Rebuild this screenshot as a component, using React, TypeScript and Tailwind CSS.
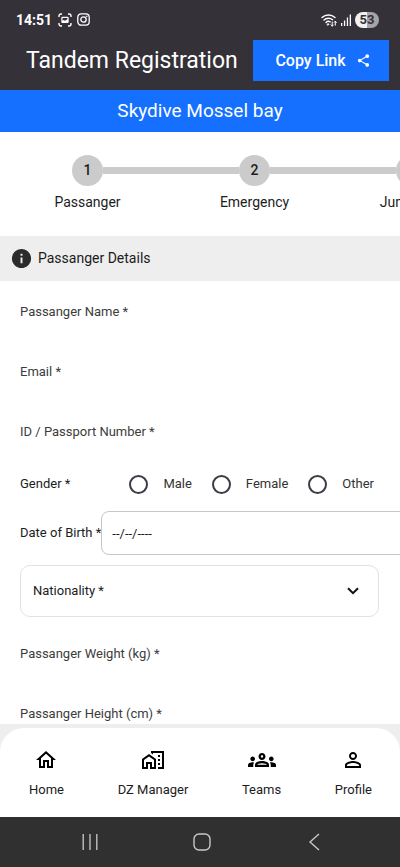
import { useState } from 'react';
import {
  MdInfo,
  MdOutlineGroups,
  MdOutlineHome,
  MdOutlineHomeWork,
  MdPersonOutline,
  MdShare,
} from 'react-icons/md';

const STEPS = [
  { label: 'Passanger', width: 'w-[167px]' },
  { label: 'Emergency', width: 'w-[167px]' },
  { label: 'Jump Info', width: 'w-[147px]' },
];
const GENDERS = ['Male', 'Female', 'Other'];

const NAV_ITEMS = [
  { label: 'Home', Icon: MdOutlineHome },
  { label: 'DZ Manager', Icon: MdOutlineHomeWork },
  { label: 'Teams', Icon: MdOutlineGroups },
  { label: 'Profile', Icon: MdPersonOutline },
];

function StatusBar() {
  return (
    <div className="flex h-[39px] items-center justify-between pl-4 pr-[21px] text-white">
      <div className="flex items-center gap-[5px]">
        <span className="text-[14px] leading-5 font-bold">14:51</span>
        <svg className="ml-px size-[14px]" viewBox="0 0 14 14" fill="none" stroke="currentColor" strokeWidth="1.4">
          <path d="M1 4V3a2 2 0 0 1 2-2h1M10 1h1a2 2 0 0 1 2 2v1M13 10v1a2 2 0 0 1-2 2h-1M4 13H3a2 2 0 0 1-2-2v-1" />
          <rect x="3.9" y="4.4" width="6.2" height="5" rx="0.6" strokeWidth="1.2" />
          <path d="M4 9.4V8l1.6-1 1.4.8L10 6v3.4z" fill="currentColor" stroke="none" />
        </svg>
        <svg className="size-[13px]" viewBox="0 0 13 13" fill="none" stroke="currentColor" strokeWidth="1.3">
          <rect x="0.8" y="0.8" width="11.4" height="11.4" rx="3.4" />
          <circle cx="6.5" cy="6.5" r="2.7" />
          <circle cx="9.8" cy="3.2" r="0.8" fill="currentColor" stroke="none" />
        </svg>
      </div>
      <div className="flex items-center gap-1">
        <svg className="h-[14px] w-4" viewBox="0 0 16 14" fill="none" stroke="currentColor" strokeWidth="1.4" strokeLinecap="round">
          <path d="M1 4.6a9.3 9.3 0 0 1 13 0M3 7.1a6.4 6.4 0 0 1 8.6-.3M5 9.4a3.6 3.6 0 0 1 4.2-.6" />
          <path d="M6 11.2a1.5 1.5 0 0 1 2.2 0L7.1 12.3z" fill="currentColor" strokeWidth="0.6" />
          <path d="M11.2 9v4M10 11.9l1.2 1.2 1.2-1.2M14.3 12.2V8.4M13.2 9.4l1.1-1.2 1.1 1.2" strokeWidth="1" />
        </svg>
        <svg className="h-3 w-[10px]" viewBox="0 0 10 12" fill="currentColor">
          <rect x="0" y="9" width="1.3" height="3" />
          <rect x="2.9" y="6.5" width="1.3" height="5.5" />
          <rect x="5.8" y="3.5" width="1.3" height="8.5" />
          <rect x="8.7" y="0.5" width="1.3" height="11.5" />
        </svg>
        <span className="flex h-4 w-6 items-center justify-center rounded-full bg-linear-to-r from-[#f1f1f1] from-50% to-[#a5a4a7] to-50% text-[13px] leading-4 font-bold text-[#343138]">
          53
        </span>
      </div>
    </div>
  );
}

function Stepper() {
  return (
    <ol className="flex overflow-hidden pt-[23px] pb-6 pl-1">
      {STEPS.map(({ label, width }, i) => (
        <li key={label} className={`flex shrink-0 flex-col items-center ${width}`}>
          <div className="flex w-full items-center">
            <span className={i === 0 ? 'h-[7px] flex-1' : 'h-[7px] flex-1 bg-[#cbcbcb]'} />
            <span className="flex size-[31px] items-center justify-center rounded-full bg-[#cbcbcb] text-[14px] font-medium">
              {i + 1}
            </span>
            <span className={i === STEPS.length - 1 ? 'h-[7px] flex-1' : 'h-[7px] flex-1 bg-[#cbcbcb]'} />
          </div>
          <span className="mt-1.5 text-[14px] leading-5">{label}</span>
        </li>
      ))}
    </ol>
  );
}

function TextField({ label, type = 'text' }: { label: string; type?: string }) {
  return (
    <input
      type={type}
      aria-label={label}
      placeholder={label}
      className="block h-[60px] w-full px-5 text-[13px] outline-none placeholder:text-[#3c3c3c] placeholder:opacity-100"
    />
  );
}

function PassengerForm() {
  const [gender, setGender] = useState('');

  return (
    <form>
      <TextField label="Passanger Name *" />
      <TextField label="Email *" type="email" />
      <TextField label="ID / Passport Number *" />

      <div
        role="radiogroup"
        aria-labelledby="gender-label"
        className="flex h-[46px] items-center pr-[26px] pl-5 text-[13px]"
      >
        <span id="gender-label" className="flex-1">
          Gender *
        </span>
        <div className="flex gap-5">
          {GENDERS.map((option) => (
            <label key={option} className="flex items-center gap-[15px] text-[#333]">
              <input
                type="radio"
                name="gender"
                value={option}
                checked={gender === option}
                onChange={() => setGender(option)}
                className="size-[19px] appearance-none rounded-full border-2 border-[#3d3b46] checked:border-[6px]"
              />
              {option}
            </label>
          ))}
        </div>
      </div>

      <div className="mt-1 flex items-center overflow-hidden pl-5 text-[13px]">
        <label htmlFor="dob" className="shrink-0">
          Date of Birth *
        </label>
        <input
          id="dob"
          type="text"
          defaultValue="--/--/----"
          className="h-11 w-full shrink-0 rounded-lg border border-[#c6c6c6] px-[10px] outline-none"
        />
      </div>

      <div className="relative mt-[10px] mr-[21px] mb-1.5 ml-5">
        <select
          aria-label="Nationality"
          defaultValue=""
          className="h-[52px] w-full appearance-none rounded-[10px] border border-[#e2e2e2] bg-white pr-10 pl-3 text-[13px] outline-none"
        >
          <option value="">Nationality *</option>
        </select>
        <svg
          className="pointer-events-none absolute top-[22px] right-5 h-2 w-3"
          viewBox="0 0 12 8"
          fill="none"
          stroke="#111"
          strokeWidth="2"
        >
          <path d="M1 1.2l5 5 5-5" />
        </svg>
      </div>

      <TextField label="Passanger Weight (kg) *" />
      <TextField label="Passanger Height (cm) *" />
    </form>
  );
}

function BottomNav() {
  return (
    <div className="bg-[#eee] pt-1">
      <nav className="flex h-[89px] justify-between rounded-t-[24px] bg-white pr-7 pl-[29px] pt-5 text-[13px]">
        {NAV_ITEMS.map(({ label, Icon }) => (
          <a key={label} href="#" className="flex flex-col items-center gap-2">
            <Icon className={label === 'Teams' ? '-my-0.5 size-7 text-black' : 'size-6 text-black'} />
            <span className="leading-5">{label}</span>
          </a>
        ))}
      </nav>
    </div>
  );
}

function SystemBar() {
  return (
    <div className="flex h-[50px] items-center justify-between bg-[#303030] pr-[77px] pl-[81px] text-[#c8c8c8]">
      <button aria-label="Recent apps">
        <svg className="size-[18px]" viewBox="0 0 18 18" fill="none" stroke="currentColor" strokeWidth="1.3">
          <path d="M2.2 1v16M9 1v16M15.8 1v16" />
        </svg>
      </button>
      <button aria-label="Home">
        <svg className="size-[18px]" viewBox="0 0 18 18" fill="none" stroke="currentColor" strokeWidth="1.4">
          <rect x="1" y="1" width="16" height="16" rx="5" />
        </svg>
      </button>
      <button aria-label="Back">
        <svg className="size-[18px]" viewBox="0 0 18 18" fill="none" stroke="currentColor" strokeWidth="1.4">
          <path d="M14 1L5 9l9 8" />
        </svg>
      </button>
    </div>
  );
}

export default function App() {
  return (
    <div className="flex h-screen flex-col overflow-hidden bg-white font-['Roboto',sans-serif] text-[#1c1c1c]">
      <header className="bg-[#343138] pb-[9px]">
        <StatusBar />
        <div className="flex items-center justify-between pt-px pr-[11px] pl-[26px]">
          <h1 className="text-[23px] leading-8 whitespace-nowrap text-white">Tandem Registration</h1>
          <button className="flex h-[41px] w-[136px] items-center justify-center gap-[10px] bg-[#1570ff] pl-1 text-[16px] font-medium text-white">
            Copy Link
            <MdShare className="size-[15px]" />
          </button>
        </div>
      </header>
      <div className="flex h-[42px] shrink-0 items-center justify-center bg-[#1570ff] text-[19px] text-white">
        Skydive Mossel bay
      </div>
      <main className="min-h-0 flex-1 overflow-y-auto [scrollbar-width:none]">
        <Stepper />
        <h2 className="flex h-[45px] items-center gap-[5px] bg-[#eee] pl-[10px] text-[14px]">
          <MdInfo className="size-[23px] text-[#2b2b2b]" />
          Passanger Details
        </h2>
        <PassengerForm />
      </main>
      <BottomNav />
      <SystemBar />
    </div>
  );
}
